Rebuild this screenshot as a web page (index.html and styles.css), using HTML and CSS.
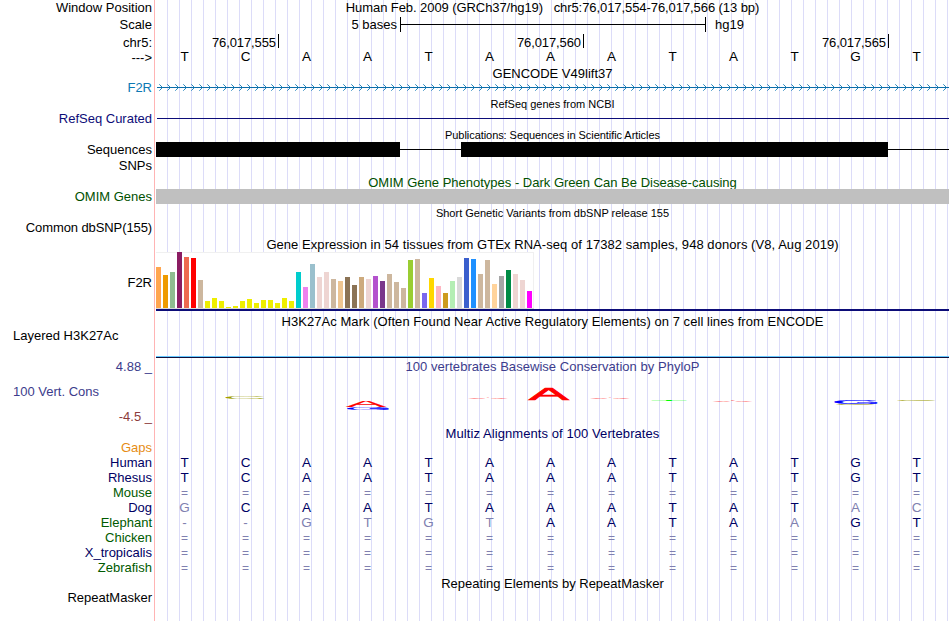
FILE: index.html
```
<!DOCTYPE html>
<html lang="en">
<head>
    <meta charset="UTF-8">
    <title>chr5:76,017,554-76,017,566</title>
    <link rel="stylesheet" href="styles.css">
</head>
<body>
<div class="browser">
    <div class="row position">
        <div class="label">Window Position</div>
        <div class="data title t-pos">Human Feb. 2009 (GRCh37/hg19) &nbsp; chr5:76,017,554-76,017,566 (13 bp)</div>
    </div>
    <div class="row scale">
        <div class="label">Scale</div>
        <div class="data">
            <span class="scale-size">5 bases</span>
            <span class="scale-bar"></span>
            <span class="scale-db">hg19</span>
        </div>
    </div>
    <div class="row ruler">
        <div class="label">chr5:</div>
        <div class="data">
            <span class="tick first">76,017,555</span>
            <span class="tick">76,017,560</span>
            <span class="tick">76,017,565</span>
        </div>
    </div>
    <div class="row sequence">
        <div class="label">---&gt;</div>
        <div class="data bases" data-seq="TCAATAAATATGT"></div>
    </div>

    <div class="title-row"><span>GENCODE V49lift37</span></div>
    <div class="row gencode">
        <div class="label">F2R</div>
        <div class="data">
            <svg width="793" height="15">
                <defs>
                    <pattern id="chevrons" x="3" y="0" width="8" height="15" patternUnits="userSpaceOnUse">
                        <path d="M0.3 4.3 L3.5 7.5 L0.3 10.7" fill="none" stroke="#0c78b4" stroke-width="0.9"/>
                    </pattern>
                </defs>
                <rect x="1" y="7" width="792" height="1" fill="#0c6ca8"/>
                <rect x="1" y="0" width="792" height="15" fill="url(#chevrons)"/>
            </svg>
        </div>
    </div>

    <div class="title-row small tall"><span>RefSeq genes from NCBI</span></div>
    <div class="row refseq">
        <div class="label">RefSeq Curated</div>
        <div class="data"><span class="line"></span></div>
    </div>

    <div class="title-row small tall"><span class="t-pubs">Publications: Sequences in Scientific Articles</span></div>
    <div class="row sequences">
        <div class="label">Sequences</div>
        <div class="data">
            <span class="block b1"></span>
            <span class="gap g1"></span>
            <span class="block b2"></span>
            <span class="gap g2"></span>
        </div>
    </div>
    <div class="row snps">
        <div class="label">SNPs</div>
        <div class="data"></div>
    </div>

    <div class="title-row tall omim-title"><span>OMIM Gene Phenotypes - Dark Green Can Be Disease-causing</span></div>
    <div class="row omim">
        <div class="label">OMIM Genes</div>
        <div class="data"></div>
    </div>

    <div class="title-row small tall"><span>Short Genetic Variants from dbSNP release 155</span></div>
    <div class="row dbsnp">
        <div class="label">Common dbSNP(155)</div>
        <div class="data"></div>
    </div>

    <div class="title-row gtex-title"><span class="t-gtex">Gene Expression in 54 tissues from GTEx RNA-seq of 17382 samples, 948 donors (V8, Aug 2019)</span></div>
    <div class="row gtex">
        <div class="label">F2R</div>
        <div class="data"><div class="bars" id="gtexBars"></div></div>
    </div>

    <div class="title-row h3k-title"><span class="t-h3k">H3K27Ac Mark (Often Found Near Active Regulatory Elements) on 7 cell lines from ENCODE</span></div>
    <div class="row h3k">
        <div class="label left">Layered H3K27Ac</div>
        <div class="data"></div>
    </div>

    <div class="row cons-top">
        <div class="label">4.88 _</div>
        <div class="data title t-cons">100 vertebrates Basewise Conservation by PhyloP</div>
    </div>
    <div class="row cons">
        <div class="label">
            <span class="cons-name">100 Vert. Cons</span>
            <span class="cons-min">-4.5 _</span>
        </div>
        <div class="data">
            <!-- sequence logo, letters stretched to the score -->
            <svg class="logo" width="793" height="50" viewBox="156 375 793 50">
                <text class="c" transform="translate(222.3 399) scale(6.2 .4)">C</text>
                <text class="g" transform="translate(344 410) scale(6.3 .36)">G</text>
                <text class="a" transform="translate(346 407) scale(6 .98)">A</text>
                <text class="a" transform="translate(468 399) scale(6 .14)">A</text>
                <text class="a big" transform="translate(528.7 400) scale(6 1.74)">A</text>
                <text class="a" transform="translate(590 399) scale(6 .14)">A</text>
                <text class="t" transform="translate(650 401) scale(6.2 .12)">T</text>
                <text class="a" transform="translate(712.5 402) scale(6 .22)">A</text>
                <text class="c" transform="translate(833 405) scale(6.2 .12)">C</text>
                <text class="g big" transform="translate(832 404) scale(6.3 .54)">G</text>
                <text class="c" transform="translate(894 401) scale(6.2 .12)">C</text>
            </svg>
        </div>
    </div>

    <div class="title-row multiz-title"><span class="t-multiz">Multiz Alignments of 100 Vertebrates</span></div>
    <div class="row">
        <div class="label gaps">Gaps</div>
        <div class="data"></div>
    </div>
    <!-- lower case = differs from the human base -->
    <div class="row align">
        <div class="label navy">Human</div>
        <div class="data bases" data-seq="TCAATAAATATGT"></div>
    </div>
    <div class="row align">
        <div class="label navy">Rhesus</div>
        <div class="data bases" data-seq="TCAATAAATATGT"></div>
    </div>
    <div class="row align">
        <div class="label green">Mouse</div>
        <div class="data bases" data-seq="============="></div>
    </div>
    <div class="row align">
        <div class="label navy">Dog</div>
        <div class="data bases" data-seq="gCAATAAATATac"></div>
    </div>
    <div class="row align">
        <div class="label green">Elephant</div>
        <div class="data bases" data-seq="--gtgtAATAaGT"></div>
    </div>
    <div class="row align">
        <div class="label green">Chicken</div>
        <div class="data bases" data-seq="============="></div>
    </div>
    <div class="row align">
        <div class="label navy">X_tropicalis</div>
        <div class="data bases" data-seq="============="></div>
    </div>
    <div class="row align">
        <div class="label green">Zebrafish</div>
        <div class="data bases" data-seq="============="></div>
    </div>

    <div class="title-row"><span>Repeating Elements by RepeatMasker</span></div>
    <div class="row">
        <div class="label">RepeatMasker</div>
        <div class="data"></div>
    </div>
</div>
<script src="script.js"></script>
</body>
</html>
```
FILE: styles.css
```
html, body {
    margin: 0;
    padding: 0;
    background-color: #fff;
    font-family: "Liberation Sans", Arial, Helvetica, sans-serif;
    font-size: 13px;
    color: #000;
}

.browser {
    width: 949px;
    height: 621px;
    overflow: hidden;
    background-image:
        linear-gradient(to right, transparent 154px, #ffb4b4 154px, #ffb4b4 155px, #fff 155px, #fff 160px, transparent 160px),
        linear-gradient(to right, #fff 154px, transparent 154px),
        repeating-linear-gradient(to right, transparent 0, transparent 11px, #dcdcf8 11px, #dcdcf8 12px);
}

.row {
    display: flex;
    height: 15px;
    line-height: 15px;
    white-space: nowrap;
}

.label {
    width: 152px;
    margin-right: 4px;
    flex: none;
    text-align: right;
}

.label.left {
    width: 139px;
    padding-left: 13px;
    text-align: left;
}

.data {
    width: 793px;
    flex: none;
    display: flex;
}

.title {
    justify-content: center;
}

.title-row {
    height: 15px;
    line-height: 18px;
    margin-left: 156px;
    text-align: center;
    white-space: nowrap;
}

.title-row.tall {
    height: 16px;
    line-height: 20px;
}

.title-row.small {
    font-size: 11px;
    line-height: 18px;
}

.t-pos { letter-spacing: -0.075px; }
.t-pubs { letter-spacing: -0.06px; }
.t-gtex { letter-spacing: 0.055px; }
.t-h3k { letter-spacing: 0.05px; }
.t-cons { letter-spacing: 0.04px; }
.t-multiz { letter-spacing: 0.08px; }

/* position and ruler */
.position {
    height: 17px;
    line-height: 16px;
}

.scale {
    height: 17px;
    line-height: 16px;
}

.scale-size {
    width: 241px;
    text-align: right;
}

.scale-bar {
    width: 304px;
    height: 15px;
    margin-left: 3px;
    border-left: 1px solid #000;
    border-right: 1px solid #000;
    background: linear-gradient(#000, #000) 0 7px / 100% 1px no-repeat;
}

.scale-db {
    margin-left: 9px;
}

.ruler {
    height: 16px;
    line-height: 17px;
}

.tick {
    width: 302px;
    height: 14px;
    padding-right: 2px;
    border-right: 1px solid #000;
    text-align: right;
    letter-spacing: -0.1px;
}

.tick.first {
    width: 120px;
}

.bases {
    margin-left: -2px;
    font-size: 13.5px;
}

.bases span {
    width: 61px;
    text-align: center;
}

.sequence .bases {
    line-height: 13px;
}

/* gene tracks */
.gencode .label {
    color: #0c78b4;
}

.refseq .label {
    color: #0c0c78;
}

.line {
    width: 792px;
    height: 1px;
    margin: 7px 0 0 1px;
    background-color: #0c0c78;
}

.sequences .data {
    align-items: center;
}

.block {
    height: 15px;
    background-color: #000;
}

.gap {
    height: 1px;
    background-color: #000;
}

.b1 { width: 244px; }
.g1 { width: 61px; }
.b2 { width: 427px; }
.g2 { width: 61px; }

.snps {
    height: 16px;
    line-height: 17px;
}

.omim-title, .omim {
    color: #005000;
}

.omim-title {
    overflow: hidden;
}

.omim .data {
    background-color: #c0c0c0;
}

.dbsnp .label {
    letter-spacing: -0.1px;
}

/* expression */
.title-row.gtex-title {
    height: 17px;
    line-height: 20px;
}

.gtex {
    height: 60px;
    line-height: 62px;
}

.gtex .data {
    height: 57px;
    border-bottom: 2px solid #0c0c78;
}

.bars {
    display: flex;
    align-items: flex-end;
    gap: 2px;
    box-sizing: border-box;
    width: 378px;
    height: 57px;
    background-color: #fff;
    border-bottom: 1px solid #d8d8d8;
    box-shadow: inset 0 1px #f0f0f0, inset -1px 0 #f0f0f0;
}

.bars span {
    width: 5px;
    flex: none;
}

.title-row.h3k-title {
    height: 16px;
    line-height: 20px;
}

.h3k {
    height: 30px;
    line-height: 16px;
}

.h3k .data {
    height: 30px;
    background: linear-gradient(#64c8ff 0 1px, #10103c 1px 2px) 0 100% / 100% 2px no-repeat;
}

/* conservation */
.cons-top {
    height: 17px;
    line-height: 18px;
    color: #3c3c8c;
}

.cons {
    height: 50px;
    color: #3c3c8c;
}

.cons .label {
    display: flex;
    flex-direction: column;
}

.cons-name {
    padding: 9px 0 0 13px;
    text-align: left;
}

.cons-min {
    margin-top: 10px;
    color: #8c3c3c;
}

.logo text {
    font-size: 10px;
}

.logo .a { fill: #ff0000; stroke: #ff0000; }
.logo .c { fill: #a0a000; }
.logo .g { fill: #0000ff; stroke: #0000ff; }
.logo .t { fill: #00ff00; }

.logo .a, .logo .g {
    stroke-width: 0.1px;
}

.logo .big {
    stroke-width: 0.3px;
}

/* alignment */
.multiz-title, .navy, .align .bases {
    color: #000064;
}

.title-row.multiz-title {
    line-height: 17px;
}

.green {
    color: #005a00;
}

.gaps {
    color: #e68c14;
}

.align .bases .diff {
    color: #8080b0;
}

.align .bases .unaligned {
    font-size: 12px;
    line-height: 17px;
}
```
FILE: script.js
```
const bars = [
    [41, '#ffa54f'], [33, '#ee9a00'], [36, '#8fbc8f'], [56, '#8b1c62'], [51, '#ee6a50'], [50, '#ff0000'],
    [28, '#cdb79e'], [7, '#eeee00'], [10, '#eeee00'], [7, '#eeee00'], [1, '#eeee00'], [2, '#eeee00'],
    [7, '#eeee00'], [9, '#eeee00'], [5, '#eeee00'], [8, '#eeee00'], [8, '#eeee00'], [5, '#eeee00'],
    [10, '#eeee00'], [7, '#eeee00'], [36, '#00cdcd'], [21, '#ee82ee'], [44, '#9ac0cd'], [31, '#eed5d2'],
    [36, '#eed5d2'], [29, '#cdb79e'], [27, '#eec591'], [31, '#8b7355'], [23, '#8b7355'], [31, '#cdaa7d'],
    [29, '#eed5d2'], [32, '#b452cd'], [27, '#7a378b'], [34, '#cdb79e'], [26, '#cdb79e'], [20, '#cdb79e'],
    [48, '#9acd32'], [49, '#cdb79e'], [15, '#7a67ee'], [30, '#ffd700'], [22, '#ffb6c1'], [15, '#cd9b1d'],
    [27, '#b4eeb4'], [31, '#d9d9d9'], [50, '#3a5fcd'], [49, '#1e90ff'], [34, '#cdb79e'], [48, '#cdb79e'],
    [24, '#ffd39b'], [32, '#a6a6a6'], [38, '#008b45'], [34, '#eed5d2'], [28, '#eed5d2'], [17, '#ff00ff']
];

const barBox = document.getElementById('gtexBars');
bars.forEach(([height, color]) => {
    const bar = document.createElement('span');
    bar.style.height = height + 'px';
    bar.style.backgroundColor = color;
    barBox.appendChild(bar);
});

document.querySelectorAll('.bases').forEach(row => {
    for (const ch of row.dataset.seq) {
        const base = document.createElement('span');
        base.textContent = ch.toUpperCase();
        if (!/[A-Z]/.test(ch)) base.classList.add('diff');
        if (ch === '=') base.classList.add('unaligned');
        row.appendChild(base);
    }
});
```
